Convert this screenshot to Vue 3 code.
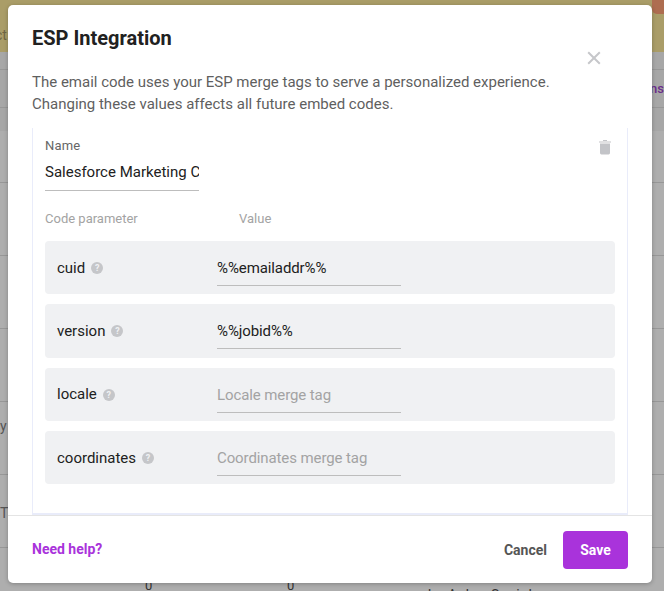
<script setup>
const params = [
  { name: 'cuid', value: '%%emailaddr%%', placeholder: 'Cuid merge tag' },
  { name: 'version', value: '%%jobid%%', placeholder: 'Version merge tag' },
  { name: 'locale', value: '', placeholder: 'Locale merge tag' },
  { name: 'coordinates', value: '', placeholder: 'Coordinates merge tag' }
]
const bgRows = [
  { h: 52, text: '', top: 0 },
  { h: 73, text: '', top: 0 },
  { h: 73, text: '', top: 0 },
  { h: 73, text: '', top: 0 },
  { h: 73, text: 'y', top: 14 },
  { h: 73, text: 'T', top: 28 }
]
</script>

<template>
  <div class="page">
    <div class="backdrop">
      <div class="banner">
        <span class="banner-text">ct</span>
        <span class="dot"></span>
      </div>
      <div class="tabs">
        <div class="tab-row"></div>
        <div class="tab-row purple">ns</div>
        <div class="tab-row short"></div>
      </div>
      <div v-for="(r, i) in bgRows" :key="i" class="bg-row" :style="{ height: r.h + 'px', paddingTop: r.top + 'px' }">
        <span class="bg-text">{{ r.text }}</span>
      </div>
      <div class="bg-last">
        <span class="zero-a">0</span><span class="zero-b">0</span><span class="social">by Aubry Social</span>
      </div>
    </div>

    <section class="modal">
      <header class="head">
        <div class="head-text">
          <h1>ESP Integration</h1>
          <p>The email code uses your ESP merge tags to serve a personalized experience.<br>Changing these values affects all future embed codes.</p>
        </div>
        <button class="close" aria-label="Close">
          <svg width="14" height="14" viewBox="0 0 14 14"><path d="M1.2 1.2l11.6 11.6M12.8 1.2L1.2 12.8" stroke="#c6c7ca" stroke-width="2" fill="none"/></svg>
        </button>
      </header>

      <div class="scroll">
        <div class="card">
          <div class="name-row">
            <label class="field">
              <span class="field-label">Name</span>
              <input class="name-input" value="Salesforce Marketing Cloud" />
            </label>
            <svg class="trash" width="14" height="16" viewBox="0 0 14 16">
              <path d="M1 2.4h12v1.1H1z M5 1.1h4v1H5z" fill="#c3c4c8"/>
              <path d="M2 4.5h10v9.6a1.4 1.4 0 0 1-1.4 1.4H3.4A1.4 1.4 0 0 1 2 14.100z" fill="#c3c4c8"/>
            </svg>
          </div>

          <div class="col-heads">
            <span class="col-a">Code parameter</span>
            <span>Value</span>
          </div>

          <div class="rows">
            <div v-for="p in params" :key="p.name" class="row">
              <div class="row-label">
                <span>{{ p.name }}</span>
                <span class="help">?</span>
              </div>
              <input class="row-input" :value="p.value" :placeholder="p.placeholder" />
            </div>
          </div>
        </div>
      </div>

      <footer class="foot">
        <a class="help-link">Need help?</a>
        <div class="actions">
          <button class="cancel">Cancel</button>
          <button class="save">Save</button>
        </div>
      </footer>
    </section>
  </div>
</template>

<style>
html, body { margin: 0; padding: 0; background: #aeaeae; }
</style>

<style scoped>
.page {
  position: relative;
  width: 664px;
  height: 591px;
  overflow: hidden;
  font-family: Roboto, "Liberation Sans", sans-serif;
  background: #aeaeae;
}
.backdrop { display: flex; flex-direction: column; height: 591px; overflow: hidden; }
.banner {
  height: 52px;
  flex: none;
  background: #aa9d68;
  display: flex;
  justify-content: space-between;
  position: relative;
}
.banner-text { font-size: 14px; color: #6e6644; margin: 27px 0 0 -5px; }
.dot {
  position: absolute;
  right: 0; top: 0;
  width: 12px; height: 14px;
  background: #ae6d50;
  border-bottom-left-radius: 5px;
}
.tabs { height: 79px; flex: none; background: #a7a7a7; }
.tab-row { height: 17px; border-bottom: 1px solid #979797; }
.tab-row.purple {
  height: 37px;
  text-align: right;
  font-size: 13px;
  font-weight: 500;
  line-height: 38px;
  color: #6a2d8b;
  border-bottom: 1px solid #979797;
}
.tab-row.short { height: 23px; border: 0; }
.bg-row { flex: none; box-sizing: border-box; border-bottom: 1px solid #979797; }
.bg-text { font-size: 14px; color: #555; display: block; line-height: 20px; margin-left: 0; }
.bg-last { position: relative; flex: 1; font-size: 13px; color: #333; }
.zero-a { position: absolute; left: 145px; top: 30px; }
.zero-b { position: absolute; left: 287px; top: 30px; }
.social { position: absolute; left: 428px; top: 39px; font-size: 14px; letter-spacing: .6px; }

.modal {
  position: absolute;
  left: 8px;
  top: 5px;
  width: 644px;
  height: 578px;
  background: #fff;
  border-radius: 5px;
  box-shadow: 0 1px 4px rgba(0, 0, 0, .25);
  display: flex;
  flex-direction: column;
  color: #212121;
}
.head {
  flex: none;
  height: 123px;
  box-sizing: border-box;
  padding: 21px 51px 0 24px;
  display: flex;
  justify-content: space-between;
}
h1 { margin: 0; font-size: 20px; line-height: 24px; font-weight: 700; color: #212121; }
.head p { margin: 21px 0 0; font-size: 15px; line-height: 22px; color: #5f5f5f; white-space: nowrap; }
.close { border: 0; background: none; padding: 0; margin-top: 25px; width: 14px; height: 14px; display: block; }
.close svg { display: block; }
.scroll { flex: 1; min-height: 0; padding: 0 24px; overflow: hidden; }
.card {
  box-sizing: border-box;
  height: 387px;
  border: 1px solid #e9ecfa;
  border-top: 0;
  border-bottom-width: 2px;
  padding: 10px 12px 0;
}
.name-row { display: flex; justify-content: space-between; align-items: flex-start; }
.field { display: flex; flex-direction: column; }
.field-label { font-size: 13px; line-height: 15px; color: #666; letter-spacing: .2px; }
.name-input {
  width: 154px;
  box-sizing: border-box;
  border: 0;
  border-bottom: 1px solid #bdbdbd;
  outline: 0;
  padding: 0 0 7px;
  margin-top: 7px;
  height: 31px;
  background: transparent;
  font: 400 15px Roboto, sans-serif;
  color: #212121;
}
.trash { margin: 1px 3px 0 0; }
.col-heads {
  display: flex;
  margin-top: 20px;
  font-size: 13px;
  font-weight: 400;
  line-height: 16px;
  color: #a3a3a3;
}
.col-a { width: 194px; }
.rows { margin-top: 14px; display: flex; flex-direction: column; gap: 10px; }
.row {
  height: 53.33px;
  box-sizing: border-box;
  background: #f0f1f3;
  border-radius: 4px;
  padding: 0 12px;
  display: flex;
  align-items: center;
}
.row-label { width: 160px; flex: none; display: flex; align-items: center; gap: 6px; font-size: 15px; color: #212121; }
.help {
  width: 12px; height: 12px;
  border-radius: 50%;
  background: #c5c6c9;
  color: #f0f1f3;
  font-size: 9px;
  font-weight: 700;
  line-height: 12px;
  text-align: center;
  margin-top: 1px;
}
.row-input {
  width: 184px;
  height: 35px;
  align-self: flex-start;
  margin-top: 10px;
  box-sizing: border-box;
  border: 0;
  border-bottom: 1px solid #bdbdbd;
  outline: 0;
  padding: 0;
  background: transparent;
  font: 400 15px Roboto, sans-serif;
  letter-spacing: -.1px;
  color: #212121;
}
.row-input::placeholder { color: #a3a3a3; opacity: 1; }
.foot {
  flex: none;
  height: 68px;
  box-sizing: border-box;
  border-top: 1px solid #e4e4e4;
  padding: 15px 24px 0;
  display: flex;
  justify-content: space-between;
  align-items: flex-start;
}
.help-link { font-size: 14px; font-weight: 700; line-height: 36px; color: #a933db; }
.actions { display: flex; align-items: center; gap: 16px; }
.cancel, .save { border: 0; font: 700 14px Roboto, sans-serif; padding: 0; }
.cancel { background: none; color: #555; }
.save { width: 65px; height: 38px; border-radius: 4px; background: #a933db; color: #fff; }
</style>
